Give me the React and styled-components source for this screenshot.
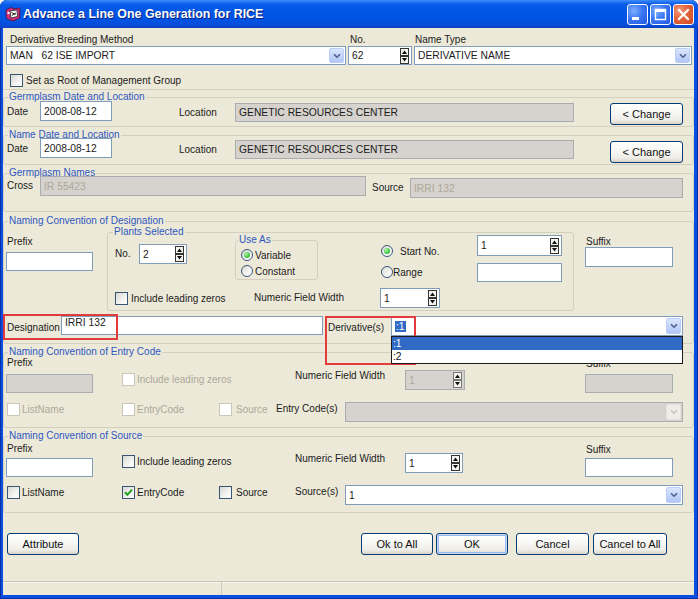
import React from "react";
import styled, { createGlobalStyle } from "styled-components";

const GlobalStyle = createGlobalStyle`
  html, body { margin: 0; padding: 0; background: #fff; }
  body {
    font-family: "Liberation Sans", Arial, sans-serif;
    font-size: 10px;
    color: #1b1b1b;
  }
  *, *::before, *::after { box-sizing: border-box; }
`;

const Window = styled.div`
  width: 698px;
  height: 599px;
  display: flex;
  flex-direction: column;
  padding: 0 4px 4px 3px;
  background: #0b4fe0;
  box-shadow: inset 1px 0 #0831a8, inset -1px 0 #0831a8, inset 0 -1px #0831a8;
  border-radius: 7px 7px 0 0;
  overflow: hidden;
`;

const TitleBar = styled.div`
  height: 28px;
  margin: 0 -4px 0 -3px;
  padding: 0 4px 0 5px;
  display: flex;
  align-items: center;
  background: linear-gradient(180deg, #3e8ff9 0%, #2574f4 7%, #0a5ce9 16%, #0055e6 45%, #0053e2 75%, #0a4cd6 92%, #0840c0 100%);
  border-radius: 7px 7px 0 0;
`;

const TitleText = styled.div`
  margin-left: 2px;
  flex: 1;
  font-size: 12.4px;
  font-weight: bold;
  color: #fff;
  text-shadow: 1px 1px #0a1f7a;
  white-space: nowrap;
`;

const CaptionGroup = styled.div`
  display: flex;
  gap: 2px;
  margin-top: 1px;
`;

const CaptionButton = styled.div`
  width: 21px;
  height: 21px;
  border: 1px solid #fff;
  border-radius: 3px;
  display: flex;
  align-items: center;
  justify-content: center;
  background: ${(p) =>
    p.$close
      ? "radial-gradient(circle at 30% 30%, #f29a7c 0%, #e4633b 45%, #cc4a22 100%)"
      : "radial-gradient(circle at 30% 30%, #7eaefc 0%, #3c79f4 45%, #2157e0 100%)"};
`;

const Client = styled.div`
  flex: 1;
  display: flex;
  flex-direction: column;
  background: #ece9d8;
  min-height: 0;
`;

const TopGrid = styled.div`
  display: grid;
  grid-template-columns: 340px 64px 278px;
  grid-template-rows: 12px 19px;
  column-gap: 2px;
  padding: 6px 0 0 3px;
`;

const Text = styled.span`
  flex: none;
  display: inline-block;
  width: ${(p) => (p.$w ? `${p.$w}px` : "auto")};
  margin-left: ${(p) => p.$ml || 0}px;
  margin-top: ${(p) => p.$mt || 0}px;
  line-height: ${(p) => p.$lh || 12}px;
  color: ${(p) => (p.$off ? "#aca899" : "#1b1b1b")};
  white-space: nowrap;
`;

const Input = styled.div`
  flex: none;
  display: flex;
  align-items: ${(p) => (p.$top ? "flex-start" : "center")};
  width: ${(p) => p.$w}px;
  height: ${(p) => p.$h || 19}px;
  margin-left: ${(p) => p.$ml || 0}px;
  margin-top: ${(p) => p.$mt || 0}px;
  padding: ${(p) => (p.$pad === "combo" ? "1px" : "0 1px 0 3px")};
  border: 1px solid ${(p) => (p.$tone === "gray" || p.$tone === "off" ? "#a9adb2" : "#7f9db9")};
  background: ${(p) => (p.$tone === "gray" || p.$tone === "off" ? "#d6d3ce" : "#fff")};
  color: ${(p) => (p.$tone === "off" ? "#aca899" : "#1b1b1b")};
  line-height: ${(p) => (p.$top ? "12px" : "normal")};
  white-space: nowrap;
  overflow: hidden;
  font-size: 10.3px;
`;

const ValueText = styled.span`
  flex: 1;
  padding-left: ${(p) => p.$pl ?? 2}px;
  overflow: hidden;
`;

const Selected = styled.span`
  background: #316ac5;
  color: #fff;
  padding: 0 1px;
  line-height: 13px;
`;

const ArrowButton = styled.div`
  flex: none;
  width: 15px;
  height: 100%;
  display: flex;
  align-items: center;
  justify-content: center;
  border: 1px solid ${(p) => (p.$off ? "#e3e1da" : "#b9cdf6")};
  border-radius: 2px;
  background: ${(p) =>
    p.$off ? "#eeede7" : "linear-gradient(180deg, #dce7fd 0%, #c3d4fb 55%, #b2c6f6 100%)"};
`;

const Separator = styled.div`
  height: 1px;
  margin-top: 2px;
  background: #d2cfbf;
`;

const RootRow = styled.label`
  display: flex;
  align-items: center;
  gap: 3px;
  margin-top: 9px;
  padding-left: 7px;
  height: 13px;
`;

const GroupBox = styled.fieldset`
  margin: ${(p) => p.$mt || 0}px 0 0 ${(p) => p.$ml || 0}px;
  padding: 0 0 ${(p) => p.$pb || 0}px 0;
  width: ${(p) => (p.$w ? `${p.$w}px` : "auto")};
  flex: none;
  border: 1px solid #d3d0c0;
  border-radius: 3px;
  min-width: 0;
`;

const GroupTitle = styled.legend`
  margin-left: ${(p) => p.$ml ?? 4}px;
  padding: 0 1px;
  line-height: 10px;
  color: #2f57c0;
  white-space: nowrap;
`;

const Row = styled.div`
  position: relative;
  display: flex;
  align-items: flex-start;
  margin-top: ${(p) => p.$mt || 0}px;
`;

const Column = styled.div`
  flex: none;
  display: flex;
  flex-direction: column;
  align-items: flex-start;
  width: ${(p) => (p.$w ? `${p.$w}px` : "auto")};
  margin-left: ${(p) => p.$ml || 0}px;
  margin-top: ${(p) => p.$mt || 0}px;
  padding-top: ${(p) => p.$pt || 0}px;
  gap: ${(p) => p.$gap || 0}px;
`;

const Btn = styled.div`
  flex: none;
  width: ${(p) => p.$w}px;
  height: 22px;
  margin-left: ${(p) => p.$ml || 0}px;
  margin-top: ${(p) => p.$mt || 0}px;
  display: flex;
  align-items: center;
  justify-content: center;
  border: 1px solid #003c74;
  border-radius: 3px;
  background: linear-gradient(180deg, #ffffff 0%, #f7f7f4 45%, #eeede7 80%, #d8d3c8 100%);
  box-shadow: ${(p) => (p.$default ? "inset 0 0 0 1px #c6dafa, inset 0 0 0 2px #9ab9ee" : "none")};
  font-size: 11px;
  color: #111;
`;

const Box = styled.span`
  flex: none;
  width: 13px;
  height: 13px;
  margin-top: ${(p) => p.$mt || 0}px;
  display: flex;
  align-items: center;
  justify-content: center;
  border: 1px solid ${(p) => (p.$off ? "#c9c7ba" : "#3a5573")};
  background: ${(p) =>
    p.$off ? "#fff" : "linear-gradient(135deg, #d9d9d3 0%, #f3f3f0 60%, #fff 100%)"};
`;

const CheckOpt = styled.div`
  flex: none;
  display: flex;
  align-items: center;
  gap: ${(p) => p.$gap ?? 2}px;
  width: ${(p) => (p.$w ? `${p.$w}px` : "auto")};
  height: ${(p) => p.$h || 13}px;
  margin-left: ${(p) => p.$ml || 0}px;
  margin-top: ${(p) => p.$mt || 0}px;
  color: ${(p) => (p.$off ? "#aca899" : "#1b1b1b")};
  white-space: nowrap;
`;

const RadioDot = styled.span`
  flex: none;
  width: 12px;
  height: 12px;
  border-radius: 50%;
  border: 1px solid #39567a;
  background: linear-gradient(135deg, #d8d8d2 0%, #f6f6f4 65%, #fff 100%);
  display: flex;
  align-items: center;
  justify-content: center;
  &::after {
    content: "";
    display: ${(p) => (p.$on ? "block" : "none")};
    width: 6px;
    height: 6px;
    border-radius: 50%;
    background: radial-gradient(circle at 35% 35%, #b6f5b2 0%, #45c944 55%, #1f9a20 100%);
  }
`;

const PlantsGrid = styled.div`
  display: grid;
  grid-template-columns: 120px 145px 97px 85px;
  padding-left: 7px;
  align-items: start;
`;

const NamingGrid = styled.div`
  display: grid;
  grid-template-columns: 118px 173px 110px 180px 88px;
  align-items: start;
  margin-top: ${(p) => p.$mt || 0}px;
`;

const RedMark = styled.div`
  position: absolute;
  left: ${(p) => p.$x}px;
  top: ${(p) => p.$y}px;
  width: ${(p) => p.$w}px;
  height: ${(p) => p.$h}px;
  border: 2px solid #e23b3b;
  pointer-events: none;
`;

const DropList = styled.div`
  position: absolute;
  left: 387px;
  top: 20px;
  width: 292px;
  height: 28px;
  border: 1px solid #1b1b1b;
  background: #fff;
  font-size: 10.3px;
`;

const DropItem = styled.div`
  height: 13px;
  line-height: 13px;
  padding-left: 1px;
  background: ${(p) => (p.$active ? "#316ac5" : "#fff")};
  color: ${(p) => (p.$active ? "#fff" : "#111")};
`;

const Footer = styled.div`
  display: flex;
  align-items: center;
  margin-top: 20px;
  padding: 0 27px 0 4px;
`;

const Spacer = styled.div`
  flex: 1;
`;

const StatusBar = styled.div`
  margin-top: auto;
  height: 14px;
  display: flex;
  border-top: 1px solid #c8c5b5;
  box-shadow: inset 0 1px #f7f6f0;
`;

const StatusCell = styled.div`
  width: ${(p) => (p.$w ? `${p.$w}px` : "auto")};
  flex: ${(p) => (p.$w ? "none" : 1)};
  border-right: ${(p) => (p.$w ? "1px solid #cfccbd" : "none")};
`;

const SpinArrows = ({ off }) => (
  <svg width="9" height="16" viewBox="0 0 9 16" style={{ flex: "none", marginLeft: "auto", marginRight: 1 }}>
    <rect x="0.5" y="0.5" width="8" height="7" fill="#f4f4f0" stroke={off ? "#777" : "#333"} />
    <rect x="0.5" y="8.5" width="8" height="7" fill="#f4f4f0" stroke={off ? "#777" : "#333"} />
    <path d="M2 6 L4.5 2.6 L7 6 Z" fill="#111" />
    <path d="M2 10 L4.5 13.4 L7 10 Z" fill="#111" />
  </svg>
);

const Chevron = ({ off }) => (
  <svg width="8" height="6" viewBox="0 0 8 6">
    <path d="M1 1.2 L4 4.2 L7 1.2" fill="none" stroke={off ? "#c4c3bc" : "#4d6185"} strokeWidth="1.6" />
  </svg>
);

const CheckMark = () => (
  <svg width="9" height="9" viewBox="0 0 9 9">
    <path d="M1 4.2 L3.4 6.8 L8 1.6" fill="none" stroke="#21a121" strokeWidth="2" />
  </svg>
);

const Spinner = ({ value, w, h = 20, ml, mt, off }) => (
  <Input $w={w} $h={h} $ml={ml} $mt={mt} $tone={off ? "off" : "white"}>
    <ValueText $pl={0}>{value}</ValueText>
    <SpinArrows off={off} />
  </Input>
);

const Combo = ({ children, w, h = 20, ml, mt, off }) => (
  <Input $w={w} $h={h} $ml={ml} $mt={mt} $pad="combo" $tone={off ? "off" : "white"}>
    <ValueText>{children}</ValueText>
    <ArrowButton $off={off}>
      <Chevron off={off} />
    </ArrowButton>
  </Input>
);

const Check = ({ label, checked, off, ...rest }) => (
  <CheckOpt $off={off} {...rest}>
    <Box $off={off}>{checked && <CheckMark />}</Box>
    {label}
  </CheckOpt>
);

const Radio = ({ label, on, gap, mt, ml }) => (
  <CheckOpt $gap={gap} $h={14} $mt={mt} $ml={ml}>
    <RadioDot $on={on} />
    {label}
  </CheckOpt>
);

const AppIcon = () => (
  <svg width="16" height="16" viewBox="0 0 16 16" style={{ flex: "none" }}>
    <path d="M1 4 L6 1.5 L9 3 L15 2 L14.5 12 L8 15 L1.5 12.5 Z" fill="#d0307a" stroke="#5a0f2c" strokeWidth="0.8" />
    <path d="M5 5 L12 4 L12.5 10.5 L6 12 Z" fill="#fff" stroke="#222" strokeWidth="0.8" />
    <path d="M6.5 6.5 L10.5 8.5 M7 9.5 L11 6.8" stroke="#222" strokeWidth="1" />
    <circle cx="3.5" cy="7" r="1.2" fill="#fff" />
  </svg>
);

const DateLocationRow = ({ mt, locMt, btnMt }) => (
  <Row $mt={mt}>
    <Text $ml={3} $w={33} $lh={20} $mt={1}>Date</Text>
    <Input $w={72} $h={20}>2008-08-12</Input>
    <Text $ml={67} $w={56} $lh={20} $mt={locMt}>Location</Text>
    <Input $w={339} $h={19} $mt={locMt} $tone="gray">GENETIC RESOURCES CENTER</Input>
    <Btn $w={73} $ml={36} $mt={btnMt}>&lt; Change</Btn>
  </Row>
);

const NamingSection = ({ title, mt, pb, off, cfg, codesLabel, labelW, comboValue, entryChecked }) => (
  <GroupBox $mt={mt} $pb={pb}>
    <GroupTitle>{title}</GroupTitle>
    <NamingGrid $mt={cfg.gridMt}>
      <Column>
        <Text $ml={3}>Prefix</Text>
        <Input $w={87} $ml={2} $mt={cfg.prefixGap} $tone={off ? "off" : "white"} />
      </Column>
      <Check label="Include leading zeros" off={off} $mt={cfg.checkMt} />
      <Text $lh={20} $mt={cfg.nfwMt}>Numeric Field Width</Text>
      <Spinner value="1" w={cfg.spinW} mt={cfg.spinMt} off={off} />
      <Column $mt={cfg.suffixMt}>
        <Text $ml={1}>Suffix</Text>
        <Input $w={88} $mt={cfg.suffixGap} $tone={off ? "off" : "white"} />
      </Column>
    </NamingGrid>
    <Row $mt={cfg.row3Mt}>
      <Check label="ListName" off={off} $ml={3} $w={115} $mt={cfg.checksMt} />
      <Check label="EntryCode" off={off} checked={entryChecked} $w={97} $mt={cfg.checksMt} />
      <Check label="Source" off={off} $gap={4} $w={labelW[0]} $mt={cfg.checksMt} />
      <Text $w={labelW[1]} $lh={14} $mt={cfg.labelMt}>{codesLabel}</Text>
      <Combo w={338} off={off}>{comboValue}</Combo>
    </Row>
  </GroupBox>
);

export default function App() {
  return (
    <>
      <GlobalStyle />
      <Window>
        <TitleBar>
          <AppIcon />
          <TitleText>Advance a Line One Generation for RICE</TitleText>
          <CaptionGroup>
            <CaptionButton>
              <svg width="19" height="19" viewBox="0 0 19 19">
                <rect x="4" y="12" width="7" height="3" fill="#fff" />
              </svg>
            </CaptionButton>
            <CaptionButton>
              <svg width="19" height="19" viewBox="0 0 19 19">
                <rect x="4.5" y="4.5" width="10" height="10" fill="none" stroke="#fff" strokeWidth="1.4" />
                <rect x="4" y="4" width="11" height="3" fill="#fff" />
              </svg>
            </CaptionButton>
            <CaptionButton $close>
              <svg width="19" height="19" viewBox="0 0 19 19">
                <path d="M5 5 L14 14 M14 5 L5 14" stroke="#fff" strokeWidth="2.2" strokeLinecap="square" />
              </svg>
            </CaptionButton>
          </CaptionGroup>
        </TitleBar>

        <Client>
          <TopGrid>
            <Text $ml={4}>Derivative Breeding Method</Text>
            <Text $ml={2}>No.</Text>
            <Text $ml={1}>Name Type</Text>
            <Combo w={340} h={19}>MAN&nbsp;&nbsp;&nbsp;62 ISE IMPORT</Combo>
            <Spinner value="62" w={64} h={19} />
            <Combo w={278} h={19}>DERIVATIVE NAME</Combo>
          </TopGrid>

          <RootRow>
            <Box />
            Set as Root of Management Group
          </RootRow>

          <Separator />

          <GroupBox $mt={2} $pb={1}>
            <GroupTitle>Germplasm Date and Location</GroupTitle>
            <DateLocationRow mt={-1} locMt={2} btnMt={2} />
          </GroupBox>

          <GroupBox $mt={3} $pb={1}>
            <GroupTitle>Name Date and Location</GroupTitle>
            <DateLocationRow mt={-2} locMt={2} btnMt={3} />
          </GroupBox>

          <GroupBox $mt={3} $pb={13}>
            <GroupTitle>Germplasm Names</GroupTitle>
            <Row $mt={-2}>
              <Text $ml={3} $w={33} $lh={20}>Cross</Text>
              <Input $w={326} $h={20} $tone="off">IR 55423</Input>
              <Text $ml={6} $w={38} $lh={20} $mt={2}>Source</Text>
              <Input $w={273} $h={20} $mt={2} $tone="off">IRRI 132</Input>
            </Row>
          </GroupBox>

          <GroupBox $mt={4} $pb={5}>
            <GroupTitle>Naming Convention of Designation</GroupTitle>
            <Row>
              <Column $w={87} $ml={2} $pt={10}>
                <Text $ml={1}>Prefix</Text>
                <Input $w={87} $mt={4} />
              </Column>

              <GroupBox $ml={14} $mt={1} $w={467} $pb={2}>
                <GroupTitle $ml={5}>Plants Selected</GroupTitle>
                <PlantsGrid>
                  <Row $mt={7}>
                    <Text $w={24} $lh={20}>No.</Text>
                    <Spinner value="2" w={48} />
                  </Row>

                  <GroupBox $mt={-2} $w={83} $pb={1}>
                    <GroupTitle $ml={2}>Use As</GroupTitle>
                    <Column $pt={3} $gap={2} $ml={5}>
                      <Radio label="Variable" on gap={2} />
                      <Radio label="Constant" gap={2} />
                    </Column>
                  </GroupBox>

                  <Column $mt={7} $gap={7}>
                    <Radio label="Start No." on gap={7} ml={1} />
                    <Radio label="Range" gap={0} ml={1} />
                  </Column>

                  <Column $mt={-2}>
                    <Spinner value="1" w={85} h={21} />
                    <Input $w={85} $h={19} $mt={7} />
                  </Column>

                  <Check label="Include leading zeros" $gap={3} $h={20} $mt={6} />
                  <Text $ml={19} $lh={20} $mt={6}>Numeric Field Width</Text>
                  <Spinner value="1" w={60} mt={6} />
                </PlantsGrid>
              </GroupBox>

              <Column $w={88} $ml={11} $pt={10}>
                <Text $ml={1} $lh={11}>Suffix</Text>
                <Input $w={88} $h={20} />
              </Column>
            </Row>

            <Row $mt={5}>
              <Text $ml={3} $w={54} $lh={20} $mt={2}>Designation</Text>
              <Input $w={262} $h={19} $top>IRRI 132</Input>
              <Text $ml={5} $w={63} $lh={20} $mt={2}>Derivative(s)</Text>
              <Combo w={292}>
                <Selected>:1</Selected>
              </Combo>
              <RedMark $x={-1} $y={-2} $w={115} $h={26} />
              <RedMark $x={321} $y={0} $w={91} $h={49} />
              <DropList>
                <DropItem $active>:1</DropItem>
                <DropItem>:2</DropItem>
              </DropList>
            </Row>
          </GroupBox>

          <NamingSection
            title="Naming Convention of Entry Code"
            mt={3}
            pb={5}
            off
            codesLabel="Entry Code(s)"
            labelW={[57, 69]}
            comboValue=""
            cfg={{
              gridMt: 0,
              prefixGap: 5,
              checkMt: 16,
              nfwMt: 9,
              spinMt: 13,
              spinW: 60,
              suffixMt: 1,
              suffixGap: 4,
              row3Mt: 9,
              checksMt: 1,
              labelMt: 0,
            }}
          />

          <NamingSection
            title="Naming Convention of Source"
            mt={3}
            pb={7}
            codesLabel="Source(s)"
            labelW={[76, 50]}
            comboValue="1"
            entryChecked
            cfg={{
              gridMt: 2,
              prefixGap: 3,
              checkMt: 12,
              nfwMt: 6,
              spinMt: 10,
              spinW: 58,
              suffixMt: 1,
              suffixGap: 2,
              row3Mt: 8,
              checksMt: 1,
              labelMt: 0,
            }}
          />

          <Footer>
            <Btn $w={72}>Attribute</Btn>
            <Spacer />
            <Btn $w={72}>Ok to All</Btn>
            <Btn $w={72} $ml={3} $default>OK</Btn>
            <Btn $w={73} $ml={8}>Cancel</Btn>
            <Btn $w={74} $ml={4}>Cancel to All</Btn>
          </Footer>

          <StatusBar>
            <StatusCell $w={219} />
            <StatusCell />
          </StatusBar>
        </Client>
      </Window>
    </>
  );
}
